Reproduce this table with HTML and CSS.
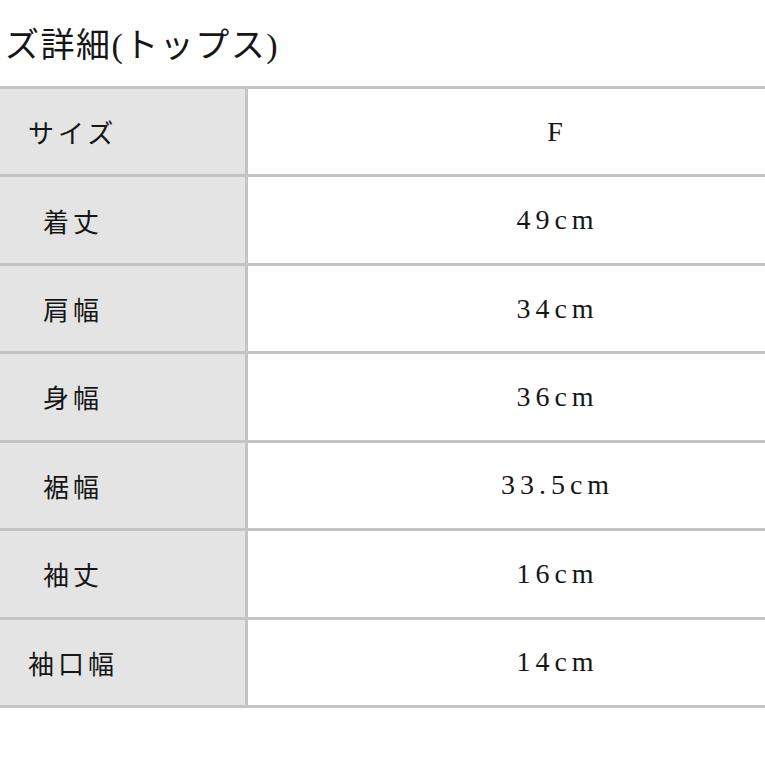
FILE: index.html
```html
<!DOCTYPE html>
<html lang="ja">
<head>
<meta charset="utf-8">
<link rel="stylesheet" href="styles.css">
</head>
<body>
<h1 class="title">ズ詳細(トップス)</h1>
<div class="table">
  <div class="row"><div class="label">サイズ</div><div class="value">F</div></div>
  <div class="row"><div class="label indent">着丈</div><div class="value">49cm</div></div>
  <div class="row"><div class="label indent">肩幅</div><div class="value">34cm</div></div>
  <div class="row"><div class="label indent">身幅</div><div class="value">36cm</div></div>
  <div class="row"><div class="label indent">裾幅</div><div class="value">33.5cm</div></div>
  <div class="row"><div class="label indent">袖丈</div><div class="value">16cm</div></div>
  <div class="row"><div class="label">袖口幅</div><div class="value">14cm</div></div>
</div>
</body>
</html>
```
FILE: styles.css
```css
html, body {
  margin: 0;
  padding: 0;
  background: #ffffff;
  overflow: hidden;
}
body {
  width: 765px;
  height: 765px;
  font-family: "Liberation Serif", "Noto Sans CJK JP", serif;
  color: #161616;
}
.title {
  margin: 0;
  padding: 24px 0 0 5px;
  height: 62px;
  box-sizing: border-box;
  font-size: 34px;
  line-height: 44px;
  font-weight: normal;
  letter-spacing: 1.5px;
  white-space: nowrap;
}
.table {
  width: 765px;
  border-top: 3px solid #c4c4c4;
  margin-top: 24px;
}
.row {
  display: grid;
  grid-template-columns: 248px 1fr;
  height: 88.43px;
  box-sizing: border-box;
  border-bottom: 3px solid #c4c4c4;
}
.label {
  background: #e4e4e4;
  border-right: 3px solid #c4c4c4;
  display: flex;
  align-items: center;
  padding-left: 28px;
  font-size: 26px;
  letter-spacing: 4px;
}
.label.indent {
  padding-left: 43px;
}
.value {
  display: flex;
  align-items: center;
  justify-content: center;
  font-size: 28px;
  letter-spacing: 5px;
  padding-left: 102px;
}
```
